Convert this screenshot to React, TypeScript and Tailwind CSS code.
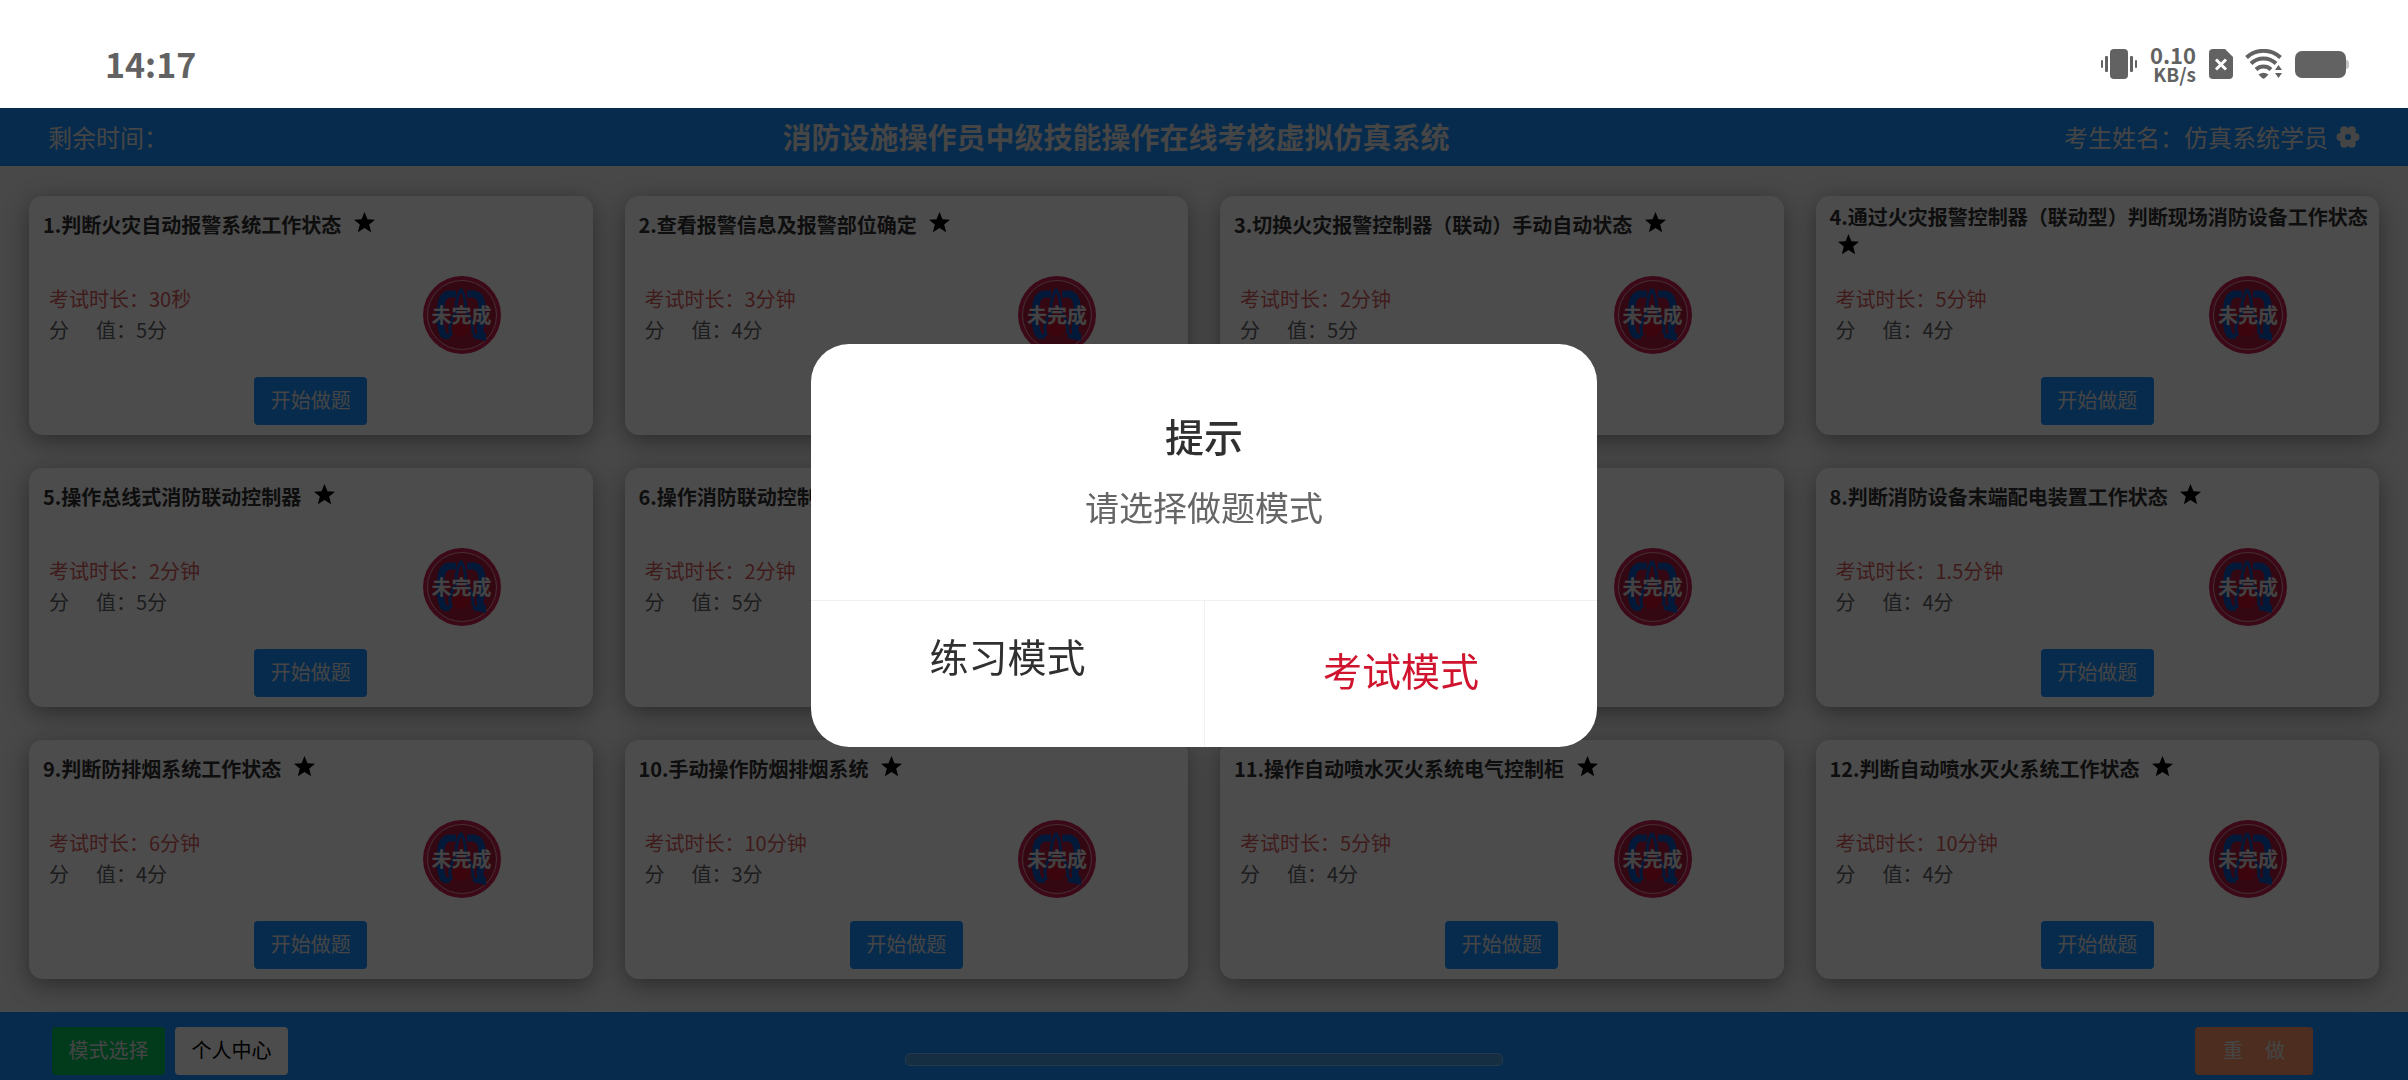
import React, { useState } from 'react';

interface Task {
  id: number;
  name: string;
  duration: string;
  score: string;
}

const tasks: Task[] = [
  { id: 1, name: '判断火灾自动报警系统工作状态', duration: '30秒', score: '5分' },
  { id: 2, name: '查看报警信息及报警部位确定', duration: '3分钟', score: '4分' },
  { id: 3, name: '切换火灾报警控制器（联动）手动自动状态', duration: '2分钟', score: '5分' },
  { id: 4, name: '通过火灾报警控制器（联动型）判断现场消防设备工作状态', duration: '5分钟', score: '4分' },
  { id: 5, name: '操作总线式消防联动控制器', duration: '2分钟', score: '5分' },
  { id: 6, name: '操作消防联动控制器', duration: '2分钟', score: '5分' },
  { id: 7, name: '操作消防电话', duration: '2分钟', score: '4分' },
  { id: 8, name: '判断消防设备末端配电装置工作状态', duration: '1.5分钟', score: '4分' },
  { id: 9, name: '判断防排烟系统工作状态', duration: '6分钟', score: '4分' },
  { id: 10, name: '手动操作防烟排烟系统', duration: '10分钟', score: '3分' },
  { id: 11, name: '操作自动喷水灭火系统电气控制柜', duration: '5分钟', score: '4分' },
  { id: 12, name: '判断自动喷水灭火系统工作状态', duration: '10分钟', score: '4分' },
];

const StatusBar: React.FC = () => (
  <div className="relative z-20 flex h-[108px] items-center justify-between bg-white pl-[105px] pr-[59px] pt-5 text-[#626262]">
    <span className="text-[34px] font-bold leading-10">14:17</span>
    <div className="flex items-center gap-3">
      <svg width="36" height="30" viewBox="0 0 36 30" fill="currentColor">
        <rect x="9" y="0" width="18" height="30" rx="4" />
        <rect x="0" y="11" width="2" height="8" rx="1" />
        <rect x="4" y="7" width="3" height="16" rx="1" />
        <rect x="29" y="7" width="3" height="16" rx="1" />
        <rect x="34" y="11" width="2" height="8" rx="1" />
      </svg>
      <div className="flex w-12 flex-col items-end pr-px font-bold">
        <span className="text-[22px] leading-[19px]">0.10</span>
        <span className="text-[19px] leading-[19px]">KB/s</span>
      </div>
      <svg width="24" height="30" viewBox="0 0 24 30">
        <path d="M4 0H16L24 8V26A4 4 0 0 1 20 30H4A4 4 0 0 1 0 26V4A4 4 0 0 1 4 0Z" fill="currentColor" />
        <path d="M7 10.5L17 20.5M17 10.5L7 20.5" stroke="#fff" strokeWidth="3" />
      </svg>
      <svg width="38" height="30" viewBox="0 0 38 30">
        <path
          d="M1.5 8.5A25 25 0 0 1 35.5 8.5M6 14.5A18 18 0 0 1 31 14.5M11 20.5A11 11 0 0 1 26 20.5"
          fill="none"
          stroke="currentColor"
          strokeWidth="4"
        />
        <path d="M13.5 25.5Q18.5 22 23.5 25.5L20 29Q18.5 30.5 17 29ZM33.5 16L37 21H30ZM33.5 29L37 24H30Z" fill="currentColor" />
      </svg>
      <svg width="54" height="27" viewBox="0 0 54 27">
        <rect x="0" y="0" width="51" height="27" rx="7" fill="currentColor" />
        <path d="M51 9Q54 9 54 12V15Q54 18 51 18Z" fill="#c4c4c4" />
      </svg>
    </div>
  </div>
);

const Star: React.FC = () => (
  <svg className="ml-2 inline-block align-baseline" width="21" height="21" viewBox="0 0 20 20" fill="#000">
    <path d="M10 0L12.8 6.8L20 7.3L14.5 12L16.3 19.2L10 15.3L3.7 19.2L5.5 12L0 7.3L7.2 6.8Z" />
  </svg>
);

const Gear: React.FC = () => (
  <svg width="24" height="24" viewBox="0 0 24 24" fill="currentColor">
    <circle cx="12" cy="12" r="9" />
    <circle cx="19.5" cy="12" r="4" />
    <circle cx="4.5" cy="12" r="4" />
    <circle cx="15.8" cy="5.2" r="4" />
    <circle cx="8.2" cy="5.2" r="4" />
    <circle cx="15.8" cy="18.8" r="4" />
    <circle cx="8.2" cy="18.8" r="4" />
    <circle cx="12" cy="12" r="3" fill="#1890ff" />
  </svg>
);

const Badge: React.FC = () => (
  <div className="relative flex size-[78px] items-center justify-center">
    <svg className="absolute inset-0" width="78" height="78" viewBox="0 0 78 78">
      <circle cx="39" cy="39" r="39" fill="#c82050" />
      <circle cx="39" cy="39" r="34.5" fill="#b01c3c" stroke="#e8a0b0" strokeWidth="1" />
      <path
        d="M33 18H26Q18 20 18 31Q15 48 21 60M44 18H51Q59 20 59 31V46Q55 52 59 61"
        fill="none"
        stroke="#0a55c0"
        strokeWidth="7"
      />
      <path
        d="M38 13Q31 27 34 36Q24 46 28 60M38 13Q44 24 42 35Q51 44 50 58"
        fill="none"
        stroke="#0a55c0"
        strokeWidth="3"
      />
      <path d="M18 58H27V63H20ZM50 58L63 57V65L50 62Z" fill="#0a55c0" />
      <circle cx="38" cy="52" r="9" fill="#c8102c" />
    </svg>
    <span className="relative text-[20px] font-bold text-[#e0e0e0]">未完成</span>
  </div>
);

const TaskCard: React.FC<{ task: Task; onStart: () => void }> = ({ task, onStart }) => (
  <section className="flex min-h-[239px] flex-col rounded-[14px] bg-white pb-[10px] shadow-[0_6px_24px_rgba(0,0,0,0.4)]">
    <div className="flex min-h-[58px] items-center py-[6px] pl-[14px] pr-2">
      <h2 className="text-[20px] font-bold leading-[30px] text-[#303030]">
        {task.id}.{task.name} <Star />
      </h2>
    </div>
    <div className="mt-auto flex items-center justify-between pl-5 pr-[92px]">
      <div className="pb-[2px] text-[20px] leading-[31px]">
        <p className="text-[#d85c5c]">考试时长：{task.duration}</p>
        <p className="flex text-[#606266]">
          <span className="mr-[27px]">分</span>值：{task.score}
        </p>
      </div>
      <Badge />
    </div>
    <button
      type="button"
      onClick={onStart}
      className="mx-auto mt-[23px] h-12 w-[113px] rounded-[4px] bg-[#1890ff] pb-[2px] text-[20px] text-[#e6e6e6]"
    >
      开始做题
    </button>
  </section>
);

const ModeDialog: React.FC<{ onClose: () => void }> = ({ onClose }) => (
  <div className="fixed inset-0 z-30 flex items-center justify-center pt-[11px]">
    <div role="dialog" aria-labelledby="mode-title" className="w-[786px] overflow-hidden rounded-[38px] bg-white text-center">
      <div className="px-8 pb-[66px] pt-[62px]">
        <h3 id="mode-title" className="text-[39px] font-medium leading-[58px] text-[#303030]">提示</h3>
        <p className="mt-4 text-[34px] leading-[54px] text-[#666]">请选择做题模式</p>
      </div>
      <div className="grid h-[147px] grid-cols-2 border-t border-[#edf1f1] text-[39px]">
        <button type="button" onClick={onClose} className="pb-[38px] text-[#303030]">
          练习模式
        </button>
        <button type="button" onClick={onClose} className="border-l border-[#edf1f1] pb-[10px] text-[#d0142e]">
          考试模式
        </button>
      </div>
    </div>
  </div>
);

const App: React.FC = () => {
  const [dialogOpen, setDialogOpen] = useState(true);

  return (
    <div className="flex min-h-screen flex-col bg-[#f0f0f0] font-['Noto_Sans_CJK_SC',sans-serif]">
      <StatusBar />
      <header className="flex h-[58px] items-center justify-between bg-[#1890ff] px-12 pb-px text-[24px] text-[#e6e6e6]">
        <span>剩余时间：</span>
        <h1 className="text-[29px] font-bold">消防设施操作员中级技能操作在线考核虚拟仿真系统</h1>
        <div className="flex items-center gap-2">
          <span>考生姓名：仿真系统学员</span>
          <Gear />
        </div>
      </header>

      <main className="grid grow grid-cols-4 content-start gap-x-8 gap-y-[33px] px-[29px] pb-[33px] pt-[30px]">
        {tasks.map((task) => (
          <TaskCard key={task.id} task={task} onStart={() => setDialogOpen(true)} />
        ))}
      </main>

      <footer className="relative flex h-[68px] items-end justify-between bg-[#1890ff] pb-[5px] pl-[52px] pr-[95px] text-[20px]">
        <div className="flex gap-[10px]">
          <button
            type="button"
            onClick={() => setDialogOpen(true)}
            className="h-12 w-[113px] rounded-[4px] bg-[#07c160] pb-[2px] text-[#e6e6e6]"
          >
            模式选择
          </button>
          <button type="button" className="h-12 w-[113px] rounded-[4px] bg-white pb-[2px] text-black">
            个人中心
          </button>
        </div>
        <button
          type="button"
          className="flex h-12 items-center gap-[22px] rounded-[4px] bg-[#ff976a] px-[28px] pb-[2px] text-[#e6e6e6]"
        >
          <span>重</span>
          <span>做</span>
        </button>
        <div className="absolute bottom-[14px] left-1/2 h-[13px] w-[598px] -translate-x-1/2 rounded-[5px] border border-[#70c4ff] bg-[#469adc]" />
      </footer>

      {dialogOpen && (
        <>
          <div className="fixed inset-0 z-10 bg-black/70" />
          <ModeDialog onClose={() => setDialogOpen(false)} />
        </>
      )}
    </div>
  );
};

export default App;
